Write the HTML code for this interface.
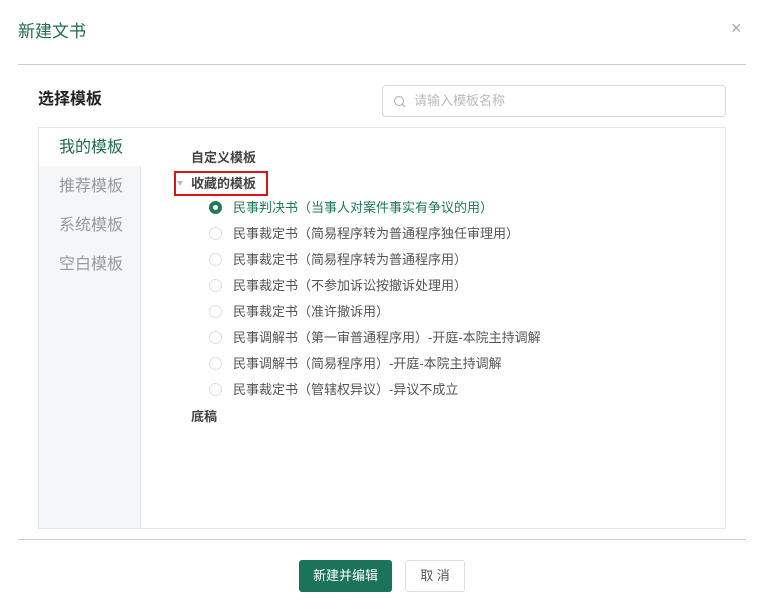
<!DOCTYPE html>
<html><head><meta charset="utf-8"><style>
*{margin:0;padding:0;box-sizing:border-box}
body{width:766px;height:612px;background:#fff;font-family:"Liberation Sans","Noto Sans CJK SC",sans-serif;position:relative;overflow:hidden;color:#333}
.a{position:absolute;white-space:nowrap}
.r{position:absolute;left:209px;width:13px;height:13px;border:1px solid #dcdfe6;border-radius:50%}
.t{position:absolute;left:233px;font-size:13px;color:#555;line-height:18px}
</style></head><body>
<div class="a" style="left:18px;top:20px;font-size:17px;color:#1f6b50;line-height:24px">新建文书</div>
<div class="a" style="left:731px;top:18px;font-size:18px;color:#aaa;line-height:20px">×</div>
<div class="a" style="left:18px;top:64px;width:728px;height:1px;background:#ccc"></div>
<div class="a" style="left:38px;top:89px;font-size:16px;font-weight:bold;color:#222;line-height:22px">选择模板</div>
<div class="a" style="left:382px;top:85px;width:344px;height:32px;border:1px solid #d4d7dc;border-radius:4px"></div>
<svg class="a" style="left:393px;top:95px" width="13" height="13" viewBox="0 0 13 13"><circle cx="6" cy="6" r="4.5" fill="none" stroke="#bbb" stroke-width="1.2"/><path d="M9.3 9.3L12 12" stroke="#bbb" stroke-width="1.2"/></svg>
<div class="a" style="left:414px;top:92px;font-size:13px;color:#bbb;line-height:18px">请输入模板名称</div>
<div class="a" style="left:38px;top:127px;width:688px;height:402px;border:1px solid #e4e6ea"></div>
<div class="a" style="left:39px;top:128px;width:102px;height:400px;background:#f5f6f8;border-right:1px solid #e4e6ea"></div>
<div class="a" style="left:39px;top:128px;width:103px;height:38px;background:#fff"></div>
<div class="a" style="left:59px;top:137px;font-size:16px;color:#1f6b50;line-height:22px">我的模板</div>
<div class="a" style="left:59px;top:176px;font-size:16px;color:#999;line-height:22px">推荐模板</div>
<div class="a" style="left:59px;top:215px;font-size:16px;color:#999;line-height:22px">系统模板</div>
<div class="a" style="left:59px;top:254px;font-size:16px;color:#999;line-height:22px">空白模板</div>
<div class="a" style="left:191px;top:149px;font-size:13px;font-weight:bold;color:#444;line-height:18px">自定义模板</div>
<div class="a" style="left:174px;top:171px;width:94px;height:25px;border:2px solid #d9151b"></div>
<div class="a" style="left:177px;top:181px;width:0;height:0;border-left:3px solid transparent;border-right:3px solid transparent;border-top:5px solid #bbb"></div>
<div class="a" style="left:191px;top:175px;font-size:13px;font-weight:bold;color:#444;line-height:18px">收藏的模板</div>
<div class="r" style="top:201px;border:4px solid #1f7a5c;background:#fff"></div>
<div class="t" style="top:199px;color:#1f7a5c">民事判决书（当事人对案件事实有争议的用）</div>
<div class="r" style="top:227px"></div><div class="t" style="top:225px">民事裁定书（简易程序转为普通程序独任审理用）</div>
<div class="r" style="top:253px"></div><div class="t" style="top:251px">民事裁定书（简易程序转为普通程序用）</div>
<div class="r" style="top:279px"></div><div class="t" style="top:277px">民事裁定书（不参加诉讼按撤诉处理用）</div>
<div class="r" style="top:305px"></div><div class="t" style="top:303px">民事裁定书（准许撤诉用）</div>
<div class="r" style="top:331px"></div><div class="t" style="top:329px">民事调解书（第一审普通程序用）-开庭-本院主持调解</div>
<div class="r" style="top:357px"></div><div class="t" style="top:355px">民事调解书（简易程序用）-开庭-本院主持调解</div>
<div class="r" style="top:383px"></div><div class="t" style="top:381px">民事裁定书（管辖权异议）-异议不成立</div>
<div class="a" style="left:191px;top:408px;font-size:13px;font-weight:bold;color:#444;line-height:18px">底稿</div>
<div class="a" style="left:18px;top:539px;width:728px;height:1px;background:#ccc"></div>
<div class="a" style="left:299px;top:560px;width:93px;height:32px;background:#1b7359;border-radius:3px;color:#fff;font-size:13px;line-height:32px;text-align:center">新建并编辑</div>
<div class="a" style="left:405px;top:560px;width:60px;height:32px;border:1px solid #dcdfe6;border-radius:3px;color:#555;font-size:13px;line-height:30px;text-align:center">取 消</div>
</body></html>
